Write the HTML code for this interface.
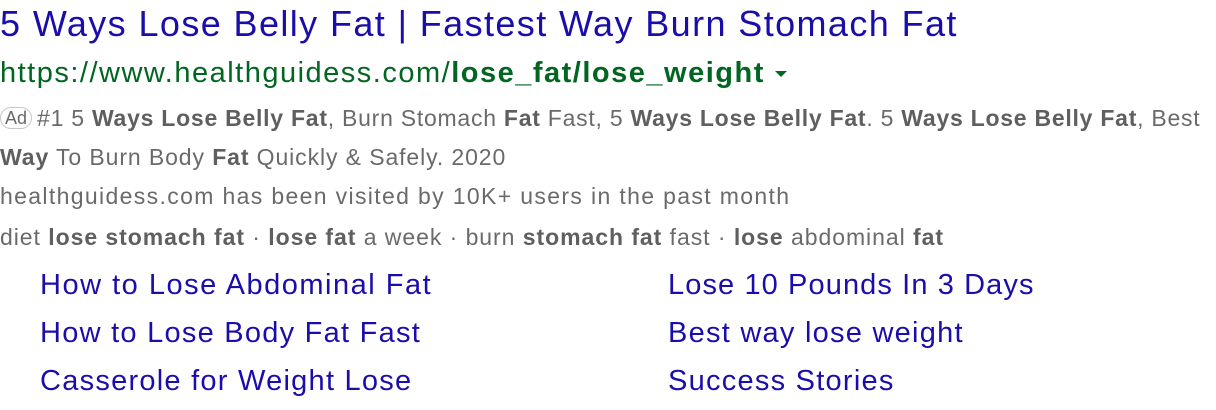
<!DOCTYPE html>
<html><head><style>
body{margin:0;width:1216px;height:410px;overflow:hidden;background:#fff;font-family:"Liberation Sans",Arial,sans-serif;}
.t{position:absolute;left:0;top:2px;font-size:36px;color:#1a0dab;white-space:nowrap;line-height:44px;letter-spacing:1.4px}
.u{position:absolute;left:0;top:55px;font-size:29px;color:#006621;white-space:nowrap;line-height:36px;letter-spacing:1.5px}
.d{position:absolute;left:0;font-size:23px;color:#6a6a6a;white-space:nowrap;line-height:30px;letter-spacing:1px}
.d b{color:#5f5f5f}
.ad{display:inline-block;border:1px solid #c6c6c6;border-radius:12px;font-size:18px;line-height:20px;padding:0 4px;margin-right:5px;vertical-align:2px;color:#6a6a6a;letter-spacing:0}
.s{position:absolute;font-size:29px;color:#1a0dab;white-space:nowrap;line-height:36px;letter-spacing:1.25px}
.tri{display:inline-block;width:0;height:0;border-left:6px solid transparent;border-right:6px solid transparent;border-top:6px solid #006621;vertical-align:5px;margin-left:10px}
</style></head><body>
<div class="t">5 Ways Lose Belly Fat | Fastest Way Burn Stomach Fat</div>
<div class="u">https://www.healthguidess.com/<b>lose_fat/lose_weight</b><span class="tri"></span></div>
<div class="d" style="top:103px;letter-spacing:0.75px"><span class="ad">Ad</span>#1 5 <b>Ways Lose Belly Fat</b>, Burn Stomach <b>Fat</b> Fast, 5 <b>Ways Lose Belly Fat</b>. 5 <b>Ways Lose Belly Fat</b>, Best</div>
<div class="d" style="top:142px;letter-spacing:0.9px"><b>Way</b> To Burn Body <b>Fat</b> Quickly &amp; Safely. 2020</div>
<div class="d" style="top:181px;letter-spacing:1.35px">healthguidess.com has been visited by 10K+ users in the past month</div>
<div class="d" style="top:222px;letter-spacing:0.95px">diet <b>lose stomach fat</b> · <b>lose fat</b> a week · burn <b>stomach fat</b> fast · <b>lose</b> abdominal <b>fat</b></div>
<div class="s" style="left:40px;top:267px;letter-spacing:1.5px">How to Lose Abdominal Fat</div>
<div class="s" style="left:40px;top:315px">How to Lose Body Fat Fast</div>
<div class="s" style="left:40px;top:363px">Casserole for Weight Lose</div>
<div class="s" style="left:668px;top:267px;letter-spacing:1.1px">Lose 10 Pounds In 3 Days</div>
<div class="s" style="left:668px;top:315px">Best way lose weight</div>
<div class="s" style="left:668px;top:363px">Success Stories</div>
</body></html>
